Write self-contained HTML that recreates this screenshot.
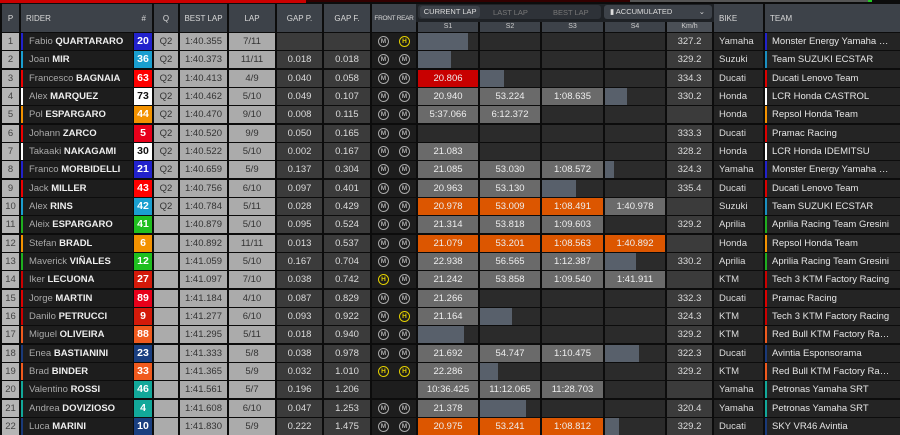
<!DOCTYPE html>
<html><head><meta charset="utf-8"><style>
*{margin:0;padding:0;box-sizing:border-box}
body{width:900px;height:435px;background:#0c0c0c;overflow:hidden;font-family:"Liberation Sans",sans-serif;position:relative}
.top1{position:absolute;left:0;top:0;width:306px;height:3px;background:#c00}
.top2{position:absolute;left:306px;top:0;width:324px;height:2px;background:#300}
.top3{position:absolute;left:630px;top:0;width:238px;height:2px;background:#555}
.top4{position:absolute;left:868px;top:0;width:4px;height:2px;background:#2c2}
.h{position:absolute;top:4px;height:28px;background:#3d4249;color:#d8d8d8;font-size:8px;display:flex;align-items:center;white-space:nowrap}
.hc{justify-content:center}
.sh{position:absolute;top:22px;height:10px;background:#3d4249;color:#ccc;font-size:7px;text-align:center;line-height:10px}
.tabs{position:absolute;left:418px;top:5px;width:183px;height:14px;background:#2e3238;border-radius:3px;font-size:7.5px;color:#777;display:flex;align-items:center}
.tabs span{flex:1;text-align:center}
.tabs .on{color:#ddd;background:#3d4249;border-radius:3px;height:12px;line-height:12px;margin-left:2px}
.acc{position:absolute;left:604px;top:5px;width:108px;height:14px;background:#3d4249;border-radius:3px;font-size:7.5px;color:#ddd;line-height:14px;padding-left:6px}
.r{position:absolute;left:0;height:17px;width:900px}
.r i{position:absolute;top:0;height:17px;font-style:normal;font-size:9.5px;line-height:17px;text-align:center;overflow:hidden;white-space:nowrap}
.p{left:2px;width:17px;background:#b5b5b5;color:#444}
.rd{left:21px;width:112px;background:#1d1d1d;color:#aaa;text-align:left!important;padding-left:6px;border-left:2px solid}
.rd b{color:#eee}
.n{left:134px;width:18px;color:#fff;font-weight:bold;font-size:10.5px!important}
.q{left:154px;width:24px;background:#ababab;color:#333}
.bl{left:180px;width:47px;background:#ababab;color:#333}
.lp{left:229px;width:46px;background:#ababab;color:#333}
.gp{left:277px;width:45px;background:#3b3b3b;color:#ddd}
.gf{left:324px;width:46px;background:#3b3b3b;color:#ddd}
.ty{left:372px;width:44px;background:#1d1d1d}
.ty u{position:absolute;top:3px;width:11px;height:11px;border:1px solid #aaa;border-radius:50%;text-decoration:none;color:#aaa;font-size:6.5px;line-height:9px;font-weight:bold;text-align:center}
.ty u:first-child{left:6px}.ty u+u{left:27px}
.ty u.y{border-color:#e3d000;color:#e3d000}
.s{background:#2b2b2b;color:#eee}
.s1{left:418px;width:60px}.s2{left:480px;width:60px}.s3{left:542px;width:61px}.s4{left:605px;width:60px}
.g{background:#6a6a6a}.o{background:#dc5600}.rr{background:#c80000}
.s em{position:absolute;left:0;top:0;height:17px;background:#58606b}
.km{left:667px;width:45px;background:#3b3b3b;color:#ddd}
.bk{left:714px;width:49px;background:#242424;color:#ddd;text-align:left!important;padding-left:5px}
.tm{left:765px;width:135px;background:#242424;color:#e6e6e6;text-align:left!important;padding-left:5px;padding-right:8px;border-left:2px solid;text-overflow:ellipsis}
</style></head><body>
<div class="top1"></div><div class="top2"></div><div class="top3"></div><div class="top4"></div>
<div class="h hc" style="left:2px;width:17px">P</div>
<div class="h" style="left:21px;width:131px;padding-left:5px">RIDER<span style="position:absolute;right:6px">#</span></div>
<div class="h hc" style="left:154px;width:24px">Q</div>
<div class="h hc" style="left:180px;width:47px">BEST LAP</div>
<div class="h hc" style="left:229px;width:46px">LAP</div>
<div class="h hc" style="left:277px;width:45px">GAP P.</div>
<div class="h hc" style="left:324px;width:46px">GAP F.</div>
<div class="h hc" style="left:372px;width:44px;font-size:6.5px;letter-spacing:-0.3px">FRONT REAR</div>
<div class="h" style="left:416px;width:298px;height:18px;background:#1e2125"></div>
<div class="tabs"><span class="on">CURRENT LAP</span><span>LAST LAP</span><span>BEST LAP</span></div>
<div class="acc">▮ ACCUMULATED<span style="position:absolute;right:7px">⌄</span></div>
<div class="sh" style="left:418px;width:60px">S1</div>
<div class="sh" style="left:480px;width:60px">S2</div>
<div class="sh" style="left:542px;width:61px">S3</div>
<div class="sh" style="left:605px;width:60px">S4</div>
<div class="sh" style="left:667px;width:45px;background:#4a4f56">Km/h</div>
<div class="h" style="left:714px;width:49px;padding-left:5px">BIKE</div>
<div class="h" style="left:765px;width:135px;padding-left:5px">TEAM</div>

<div class="r" style="top:33px"><i class="p">1</i><i class="rd" style="border-color:#22c">Fabio <b>QUARTARARO</b></i><i class="n" style="background:#22c">20</i><i class="q">Q2</i><i class="bl">1:40.355</i><i class="lp">7/11</i><i class="gp"></i><i class="gf"></i><i class="ty"><u>M</u><u class="y">H</u></i><i class="s s1"><em style="width:50px"></em></i><i class="s s2"></i><i class="s s3"></i><i class="s s4"></i><i class="km">327.2</i><i class="bk">Yamaha</i><i class="tm" style="border-color:#22c">Monster Energy Yamaha MotoGP</i></div>
<div class="r" style="top:51.3px"><i class="p">2</i><i class="rd" style="border-color:#1a9fd0">Joan <b>MIR</b></i><i class="n" style="background:#1a9fd0">36</i><i class="q">Q2</i><i class="bl">1:40.373</i><i class="lp">11/11</i><i class="gp">0.018</i><i class="gf">0.018</i><i class="ty"><u>M</u><u>M</u></i><i class="s s1"><em style="width:33px"></em></i><i class="s s2"></i><i class="s s3"></i><i class="s s4"></i><i class="km">329.2</i><i class="bk">Suzuki</i><i class="tm" style="border-color:#1a8fc0">Team SUZUKI ECSTAR</i></div>
<div class="r" style="top:69.7px"><i class="p">3</i><i class="rd" style="border-color:#e00">Francesco <b>BAGNAIA</b></i><i class="n" style="background:#f00">63</i><i class="q">Q2</i><i class="bl">1:40.413</i><i class="lp">4/9</i><i class="gp">0.040</i><i class="gf">0.058</i><i class="ty"><u>M</u><u>M</u></i><i class="s s1 rr">20.806</i><i class="s s2"><em style="width:24px"></em></i><i class="s s3"></i><i class="s s4"></i><i class="km">334.3</i><i class="bk">Ducati</i><i class="tm" style="border-color:#d00">Ducati Lenovo Team</i></div>
<div class="r" style="top:88px"><i class="p">4</i><i class="rd" style="border-color:#fff">Alex <b>MARQUEZ</b></i><i class="n" style="background:#fff;color:#111">73</i><i class="q">Q2</i><i class="bl">1:40.462</i><i class="lp">5/10</i><i class="gp">0.049</i><i class="gf">0.107</i><i class="ty"><u>M</u><u>M</u></i><i class="s s1 g">20.940</i><i class="s s2 g">53.224</i><i class="s s3 g">1:08.635</i><i class="s s4"><em style="width:22px"></em></i><i class="km">330.2</i><i class="bk">Honda</i><i class="tm" style="border-color:#fff">LCR Honda CASTROL</i></div>
<div class="r" style="top:106.3px"><i class="p">5</i><i class="rd" style="border-color:#f39200">Pol <b>ESPARGARO</b></i><i class="n" style="background:#f39200">44</i><i class="q">Q2</i><i class="bl">1:40.470</i><i class="lp">9/10</i><i class="gp">0.008</i><i class="gf">0.115</i><i class="ty"><u>M</u><u>M</u></i><i class="s s1 g">5:37.066</i><i class="s s2 g">6:12.372</i><i class="s s3"></i><i class="s s4"></i><i class="km"></i><i class="bk">Honda</i><i class="tm" style="border-color:#f39200">Repsol Honda Team</i></div>
<div class="r" style="top:124.7px"><i class="p">6</i><i class="rd" style="border-color:#e00">Johann <b>ZARCO</b></i><i class="n" style="background:#e8001a">5</i><i class="q">Q2</i><i class="bl">1:40.520</i><i class="lp">9/9</i><i class="gp">0.050</i><i class="gf">0.165</i><i class="ty"><u>M</u><u>M</u></i><i class="s s1"></i><i class="s s2"></i><i class="s s3"></i><i class="s s4"></i><i class="km">333.3</i><i class="bk">Ducati</i><i class="tm" style="border-color:#d00">Pramac Racing</i></div>
<div class="r" style="top:143px"><i class="p">7</i><i class="rd" style="border-color:#fff">Takaaki <b>NAKAGAMI</b></i><i class="n" style="background:#fff;color:#111">30</i><i class="q">Q2</i><i class="bl">1:40.522</i><i class="lp">5/10</i><i class="gp">0.002</i><i class="gf">0.167</i><i class="ty"><u>M</u><u>M</u></i><i class="s s1 g">21.083</i><i class="s s2"></i><i class="s s3"></i><i class="s s4"></i><i class="km">328.2</i><i class="bk">Honda</i><i class="tm" style="border-color:#fff">LCR Honda IDEMITSU</i></div>
<div class="r" style="top:161.3px"><i class="p">8</i><i class="rd" style="border-color:#22c">Franco <b>MORBIDELLI</b></i><i class="n" style="background:#22c">21</i><i class="q">Q2</i><i class="bl">1:40.659</i><i class="lp">5/9</i><i class="gp">0.137</i><i class="gf">0.304</i><i class="ty"><u>M</u><u>M</u></i><i class="s s1 g">21.085</i><i class="s s2 g">53.030</i><i class="s s3 g">1:08.572</i><i class="s s4"><em style="width:9px"></em></i><i class="km">324.3</i><i class="bk">Yamaha</i><i class="tm" style="border-color:#22c">Monster Energy Yamaha MotoGP</i></div>
<div class="r" style="top:179.7px"><i class="p">9</i><i class="rd" style="border-color:#e00">Jack <b>MILLER</b></i><i class="n" style="background:#f00">43</i><i class="q">Q2</i><i class="bl">1:40.756</i><i class="lp">6/10</i><i class="gp">0.097</i><i class="gf">0.401</i><i class="ty"><u>M</u><u>M</u></i><i class="s s1 g">20.963</i><i class="s s2 g">53.130</i><i class="s s3"><em style="width:34px"></em></i><i class="s s4"></i><i class="km">335.4</i><i class="bk">Ducati</i><i class="tm" style="border-color:#d00">Ducati Lenovo Team</i></div>
<div class="r" style="top:198px"><i class="p">10</i><i class="rd" style="border-color:#1a9fd0">Alex <b>RINS</b></i><i class="n" style="background:#1a9fd0">42</i><i class="q">Q2</i><i class="bl">1:40.784</i><i class="lp">5/11</i><i class="gp">0.028</i><i class="gf">0.429</i><i class="ty"><u>M</u><u>M</u></i><i class="s s1 o">20.978</i><i class="s s2 o">53.009</i><i class="s s3 o">1:08.491</i><i class="s s4 g">1:40.978</i><i class="km"></i><i class="bk">Suzuki</i><i class="tm" style="border-color:#1a8fc0">Team SUZUKI ECSTAR</i></div>
<div class="r" style="top:216.3px"><i class="p">11</i><i class="rd" style="border-color:#1fae1f">Aleix <b>ESPARGARO</b></i><i class="n" style="background:#1fbf1f">41</i><i class="q"></i><i class="bl">1:40.879</i><i class="lp">5/10</i><i class="gp">0.095</i><i class="gf">0.524</i><i class="ty"><u>M</u><u>M</u></i><i class="s s1 g">21.314</i><i class="s s2 g">53.818</i><i class="s s3 g">1:09.603</i><i class="s s4"></i><i class="km">329.2</i><i class="bk">Aprilia</i><i class="tm" style="border-color:#1fae1f">Aprilia Racing Team Gresini</i></div>
<div class="r" style="top:234.7px"><i class="p">12</i><i class="rd" style="border-color:#f39200">Stefan <b>BRADL</b></i><i class="n" style="background:#f39200">6</i><i class="q"></i><i class="bl">1:40.892</i><i class="lp">11/11</i><i class="gp">0.013</i><i class="gf">0.537</i><i class="ty"><u>M</u><u>M</u></i><i class="s s1 o">21.079</i><i class="s s2 o">53.201</i><i class="s s3 o">1:08.563</i><i class="s s4 o">1:40.892</i><i class="km"></i><i class="bk">Honda</i><i class="tm" style="border-color:#f39200">Repsol Honda Team</i></div>
<div class="r" style="top:253px"><i class="p">13</i><i class="rd" style="border-color:#1fae1f">Maverick <b>VIÑALES</b></i><i class="n" style="background:#1fbf1f">12</i><i class="q"></i><i class="bl">1:41.059</i><i class="lp">5/10</i><i class="gp">0.167</i><i class="gf">0.704</i><i class="ty"><u>M</u><u>M</u></i><i class="s s1 g">22.938</i><i class="s s2 g">56.565</i><i class="s s3 g">1:12.387</i><i class="s s4"><em style="width:31px"></em></i><i class="km">330.2</i><i class="bk">Aprilia</i><i class="tm" style="border-color:#1fae1f">Aprilia Racing Team Gresini</i></div>
<div class="r" style="top:271.3px"><i class="p">14</i><i class="rd" style="border-color:#c00">Iker <b>LECUONA</b></i><i class="n" style="background:#d41a0a">27</i><i class="q"></i><i class="bl">1:41.097</i><i class="lp">7/10</i><i class="gp">0.038</i><i class="gf">0.742</i><i class="ty"><u class="y">H</u><u>M</u></i><i class="s s1 g">21.242</i><i class="s s2 g">53.858</i><i class="s s3 g">1:09.540</i><i class="s s4 g">1:41.911</i><i class="km"></i><i class="bk">KTM</i><i class="tm" style="border-color:#c00">Tech 3 KTM Factory Racing</i></div>
<div class="r" style="top:289.7px"><i class="p">15</i><i class="rd" style="border-color:#d00">Jorge <b>MARTIN</b></i><i class="n" style="background:#e8001a">89</i><i class="q"></i><i class="bl">1:41.184</i><i class="lp">4/10</i><i class="gp">0.087</i><i class="gf">0.829</i><i class="ty"><u>M</u><u>M</u></i><i class="s s1 g">21.266</i><i class="s s2"></i><i class="s s3"></i><i class="s s4"></i><i class="km">332.3</i><i class="bk">Ducati</i><i class="tm" style="border-color:#d00">Pramac Racing</i></div>
<div class="r" style="top:308px"><i class="p">16</i><i class="rd" style="border-color:#c00">Danilo <b>PETRUCCI</b></i><i class="n" style="background:#d41a0a">9</i><i class="q"></i><i class="bl">1:41.277</i><i class="lp">6/10</i><i class="gp">0.093</i><i class="gf">0.922</i><i class="ty"><u>M</u><u class="y">H</u></i><i class="s s1 g">21.164</i><i class="s s2"><em style="width:32px"></em></i><i class="s s3"></i><i class="s s4"></i><i class="km">324.3</i><i class="bk">KTM</i><i class="tm" style="border-color:#c00">Tech 3 KTM Factory Racing</i></div>
<div class="r" style="top:326.3px"><i class="p">17</i><i class="rd" style="border-color:#f05a1e">Miguel <b>OLIVEIRA</b></i><i class="n" style="background:#f05a1e">88</i><i class="q"></i><i class="bl">1:41.295</i><i class="lp">5/11</i><i class="gp">0.018</i><i class="gf">0.940</i><i class="ty"><u>M</u><u>M</u></i><i class="s s1"><em style="width:46px"></em></i><i class="s s2"></i><i class="s s3"></i><i class="s s4"></i><i class="km">329.2</i><i class="bk">KTM</i><i class="tm" style="border-color:#f05a1e">Red Bull KTM Factory Racing</i></div>
<div class="r" style="top:344.7px"><i class="p">18</i><i class="rd" style="border-color:#1a3a7a">Enea <b>BASTIANINI</b></i><i class="n" style="background:#1a3f80">23</i><i class="q"></i><i class="bl">1:41.333</i><i class="lp">5/8</i><i class="gp">0.038</i><i class="gf">0.978</i><i class="ty"><u>M</u><u>M</u></i><i class="s s1 g">21.692</i><i class="s s2 g">54.747</i><i class="s s3 g">1:10.475</i><i class="s s4"><em style="width:34px"></em></i><i class="km">322.3</i><i class="bk">Ducati</i><i class="tm" style="border-color:#1a3a7a">Avintia Esponsorama</i></div>
<div class="r" style="top:363px"><i class="p">19</i><i class="rd" style="border-color:#f05a1e">Brad <b>BINDER</b></i><i class="n" style="background:#f05a1e">33</i><i class="q"></i><i class="bl">1:41.365</i><i class="lp">5/9</i><i class="gp">0.032</i><i class="gf">1.010</i><i class="ty"><u class="y">H</u><u class="y">H</u></i><i class="s s1 g">22.286</i><i class="s s2"><em style="width:18px"></em></i><i class="s s3"></i><i class="s s4"></i><i class="km">329.2</i><i class="bk">KTM</i><i class="tm" style="border-color:#f05a1e">Red Bull KTM Factory Racing</i></div>
<div class="r" style="top:381.3px"><i class="p">20</i><i class="rd" style="border-color:#12a89a">Valentino <b>ROSSI</b></i><i class="n" style="background:#12a89a">46</i><i class="q"></i><i class="bl">1:41.561</i><i class="lp">5/7</i><i class="gp">0.196</i><i class="gf">1.206</i><i class="ty"></i><i class="s s1 g">10:36.425</i><i class="s s2 g">11:12.065</i><i class="s s3 g">11:28.703</i><i class="s s4"></i><i class="km"></i><i class="bk">Yamaha</i><i class="tm" style="border-color:#12a89a">Petronas Yamaha SRT</i></div>
<div class="r" style="top:399.7px"><i class="p">21</i><i class="rd" style="border-color:#12a89a">Andrea <b>DOVIZIOSO</b></i><i class="n" style="background:#12a89a">4</i><i class="q"></i><i class="bl">1:41.608</i><i class="lp">6/10</i><i class="gp">0.047</i><i class="gf">1.253</i><i class="ty"><u>M</u><u>M</u></i><i class="s s1 g">21.378</i><i class="s s2"><em style="width:46px"></em></i><i class="s s3"></i><i class="s s4"></i><i class="km">320.4</i><i class="bk">Yamaha</i><i class="tm" style="border-color:#12a89a">Petronas Yamaha SRT</i></div>
<div class="r" style="top:418px"><i class="p">22</i><i class="rd" style="border-color:#1a3a7a">Luca <b>MARINI</b></i><i class="n" style="background:#1a3f80">10</i><i class="q"></i><i class="bl">1:41.830</i><i class="lp">5/9</i><i class="gp">0.222</i><i class="gf">1.475</i><i class="ty"><u>M</u><u>M</u></i><i class="s s1 o">20.975</i><i class="s s2 o">53.241</i><i class="s s3 o">1:08.812</i><i class="s s4"><em style="width:14px"></em></i><i class="km">329.2</i><i class="bk">Ducati</i><i class="tm" style="border-color:#1a3a7a">SKY VR46 Avintia</i></div>
</body></html>
